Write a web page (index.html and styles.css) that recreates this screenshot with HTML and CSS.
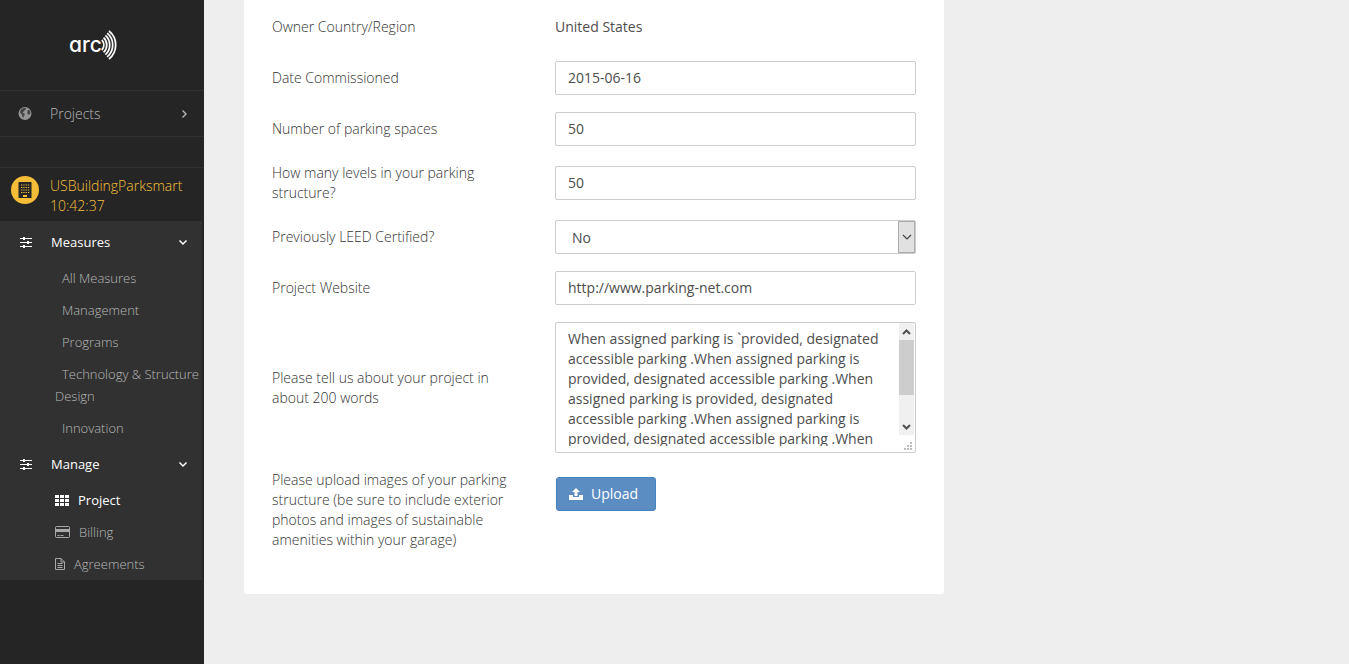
FILE: index.html
```html
<!DOCTYPE html>
<html lang="en">
<head>
<meta charset="utf-8">
<title>Arc - Project</title>
<link rel="stylesheet" href="styles.css">
</head>
<body>
<svg class="defs" aria-hidden="true">
  <symbol id="sliders" viewBox="0 0 12 12">
    <path d="M0 2.500h12M0 6.500h12M0 10.500h12" stroke="currentColor" stroke-width="1.200"/>
    <path d="M3 1h2v3H3zM7 5h2v3H7zM3 9h2v3H3z" fill="currentColor"/>
  </symbol>
  <symbol id="chevron-down" viewBox="0 0 10 10">
    <path d="M1.500 3.500L5 7l3.500-3.500" fill="none" stroke="currentColor" stroke-width="1.500"/>
  </symbol>
</svg>
<aside class="sidebar">
  <a class="logo" href="#">
    <span class="logo-text">arc</span>
    <svg class="logo-waves" width="20" height="30" viewBox="97 29.500 20 30" aria-hidden="true">
      <g fill="none" stroke="#fff" stroke-width="1.700">
        <path d="M109 30.500a18 18 0 0 1 0 28"/>
        <path d="M107.200 32.700a15.400 15.400 0 0 1 0 23.600"/>
        <path d="M105.400 34.900a12.800 12.800 0 0 1 0 19.200"/>
        <path d="M103.600 37.100a10.200 10.200 0 0 1 0 14.800"/>
        <path d="M101.800 39.300a7.600 7.600 0 0 1 0 10.400"/>
      </g>
    </svg>
  </a>
  <nav>
    <a class="nav-row" href="#">
      <svg class="globe" width="14" height="14" viewBox="0 0 14 14" aria-hidden="true">
        <circle cx="7" cy="6.500" r="6.500" fill="#959595"/>
        <path d="M5 1.200L7.500.800l.5 1.200-1.500 1.200-.3 1-1.400.8v.9l1.400.5.7 1.200-.9 1.400-.7 1.700-1-.9-.2-2-1.500-1.400-.5-2.200 1.300-2zM9.800 3.200l1.500-.4 1 1.700v2.300l-1.300 1-1.300-.9-.5-1.600z" fill="#2e2e2e" opacity=".8"/>
      </svg>
      <span class="nav-label">Projects</span>
      <svg width="10" height="10" viewBox="0 0 10 10" aria-hidden="true"><path d="M3.500 1.500L7 5 3.500 8.500" fill="none" stroke="#b5b5b5" stroke-width="1.400"/></svg>
    </a>
    <a class="project-row" href="#">
      <span class="badge">
        <svg width="14" height="18" viewBox="0 0 14 18" aria-hidden="true">
          <path d="M.5 1h13v16H.5z" fill="#252525"/>
          <path d="M3 4h8.500M3 6.500h8.500M3 9h8.500M3 11.500h8.500" stroke="#f4bc37" stroke-width="1.200" stroke-dasharray="1.300 1"/>
          <path d="M5 14h4v2H5z" fill="#f4bc37"/>
        </svg>
      </span>
      <span>USBuildingParksmart<br>10:42:37</span>
    </a>
    <div class="nav-group">
      <button class="group-head" type="button">
        <svg width="12" height="12" aria-hidden="true"><use href="#sliders"/></svg>
        <span class="nav-label">Measures</span>
        <svg width="10" height="10" aria-hidden="true"><use href="#chevron-down"/></svg>
      </button>
      <a class="sub" href="#">All Measures</a>
      <a class="sub" href="#">Management</a>
      <a class="sub" href="#">Programs</a>
      <a class="sub" href="#">Technology &amp; Structure Design</a>
      <a class="sub" href="#">Innovation</a>
      <button class="group-head" type="button">
        <svg width="12" height="12" aria-hidden="true"><use href="#sliders"/></svg>
        <span class="nav-label">Manage</span>
        <svg width="10" height="10" aria-hidden="true"><use href="#chevron-down"/></svg>
      </button>
      <a class="tool active" href="#">
        <svg width="14" height="12" viewBox="0 0 14 12" aria-hidden="true"><path d="M0 1h4v3H0zM5 1h4v3H5zM10 1h4v3h-4zM0 5h4v3H0zM5 5h4v3H5zM10 5h4v3h-4zM0 9h4v3H0zM5 9h4v3H5zM10 9h4v3h-4z" fill="#fff"/></svg>
        Project
      </a>
      <a class="tool" href="#">
        <svg width="15" height="12" viewBox="0 0 15 12" aria-hidden="true"><rect x=".5" y=".5" width="14" height="11" rx="1" fill="none" stroke="#a8a8a8"/><path d="M1 3h13v3H1z" fill="#a8a8a8"/><path d="M2.500 9.500h2M5.500 9.500h3" stroke="#a8a8a8"/></svg>
        Billing
      </a>
      <a class="tool" href="#">
        <svg width="10" height="12" viewBox="0 0 10 12" aria-hidden="true"><path d="M.5.5h5.500l3.500 3.500v7.500h-9zM6 .5V4h3.500M2.500 5.500h5M2.500 7.500h5M2.500 9.500h5" fill="none" stroke="#a8a8a8"/></svg>
        Agreements
      </a>
    </div>
  </nav>
</aside>
<main class="content">
  <form class="card">
    <div class="row">
      <span class="label">Owner Country/Region</span>
      <span class="value">United States</span>
    </div>
    <div class="row">
      <label class="label" for="date">Date Commissioned</label>
      <input class="field" id="date" type="text" value="2015-06-16">
    </div>
    <div class="row">
      <label class="label" for="spaces">Number of parking spaces</label>
      <input class="field" id="spaces" type="text" value="50">
    </div>
    <div class="row">
      <label class="label" for="levels">How many levels in your parking structure?</label>
      <input class="field" id="levels" type="text" value="50">
    </div>
    <div class="row">
      <label class="label" for="leed">Previously LEED Certified?</label>
      <div class="select-wrap">
        <select class="field" id="leed"><option>No</option><option>Yes</option></select>
        <span class="select-arrow"><svg width="10" height="10" viewBox="0 0 10 10" aria-hidden="true"><path d="M1 3l4 4 4-4" fill="none" stroke="#444" stroke-width="1.200"/></svg></span>
      </div>
    </div>
    <div class="row">
      <label class="label" for="website">Project Website</label>
      <input class="field" id="website" type="text" value="http://www.parking-net.com">
    </div>
    <div class="row">
      <label class="label" for="about">Please tell us about your project in about 200 words</label>
      <div class="area">
        <textarea id="about">When assigned parking is `provided, designated accessible parking .When assigned parking is provided, designated accessible parking .When assigned parking is provided, designated accessible parking .When assigned parking is provided, designated accessible parking .When assigned parking is provided, designated accessible parking .</textarea>
        <div class="scroll" aria-hidden="true">
          <div class="track">
            <svg width="15" height="17" viewBox="0 0 15 17"><path d="M4 11l3.500-3.500L11 11" fill="none" stroke="#505050" stroke-width="2"/></svg>
            <div class="thumb"></div>
            <svg class="down" width="15" height="17" viewBox="0 0 15 17"><path d="M4 7l3.500 3.500L11 7" fill="none" stroke="#505050" stroke-width="2"/></svg>
          </div>
          <svg width="15" height="17" viewBox="0 0 15 17"><path d="M11 7h2v2h-2zM8 10h2v2H8zM11 10h2v2h-2zM5 13h2v2H5zM8 13h2v2H8zM11 13h2v2h-2z" fill="#bdbdbd"/></svg>
        </div>
      </div>
    </div>
    <div class="row upload-row">
      <span class="label">Please upload images of your parking structure (be sure to include exterior photos and images of sustainable amenities within your garage)</span>
      <button class="upload" type="button">
        <svg width="14" height="12" viewBox="0 0 14 12" aria-hidden="true"><path d="M7 0l4 4H8.500v4h-3V4H3zM0 7h4v2h6V7h4v5H0z" fill="#fff"/></svg>
        Upload
      </button>
    </div>
  </form>
</main>
</body>
</html>
```

FILE: styles.css
```css
* {
  box-sizing: border-box;
}

body {
  margin: 0;
  min-height: 100vh;
  display: flex;
  background: #eee;
  color: #4d4d4d;
  font: 400 14px/20px "Open Sans", sans-serif;
}

a {
  color: inherit;
  text-decoration: none;
}

button,
input,
select,
textarea {
  font: inherit;
  color: inherit;
}

svg {
  flex: none;
}

.defs {
  position: absolute;
  width: 0;
  height: 0;
}

.sidebar {
  flex: none;
  width: 204px;
  background: #252525;
  color: #b8b8b8;
  font-weight: 300;
}

.logo {
  display: flex;
  align-items: center;
  height: 90px;
  padding-left: 69px;
}

.logo-text {
  color: #fff;
  font: 500 21px/30px Inter, sans-serif;
  font-feature-settings: "cv11";
}

.logo-waves {
  margin-left: -5px;
}

.nav-row {
  display: flex;
  align-items: center;
  height: 47px;
  padding: 0 15px 0 18px;
  border-top: 1px solid #303030;
  border-bottom: 1px solid #303030;
}

.nav-row .nav-label {
  margin-left: 18px;
}

.nav-label {
  flex: 1;
  text-align: left;
}

.project-row {
  display: flex;
  gap: 11px;
  margin-top: 30px;
  padding: 8px 0 5px 11px;
  border-top: 1px solid #303030;
  color: #f8c03a;
}

.badge {
  display: flex;
  align-items: center;
  justify-content: center;
  width: 28px;
  height: 28px;
  border-radius: 50%;
  background: #f4bc37;
}

.nav-group {
  margin-right: 2px;
  padding-top: 1px;
  background: #313131;
  font-size: 13px;
  line-height: 22px;
}

.group-head {
  display: flex;
  align-items: center;
  gap: 19px;
  width: 100%;
  height: 40px;
  padding: 0 14px 0 20px;
  border: 0;
  background: none;
  color: #fff;
  font-weight: 400;
}

.sub {
  display: block;
  padding: 5px 0 5px 55px;
  text-indent: 7px;
}

.tool {
  display: flex;
  align-items: center;
  gap: 9px;
  padding: 5px 0 5px 55px;
}

.tool.active {
  color: #fff;
  font-weight: 400;
}

.content {
  flex: 1;
  padding: 0 40px 70px;
}

.card {
  max-width: 700px;
  padding: 2px 28px 35px;
  border-radius: 0 0 3px 3px;
  background: #fff;
}

.row {
  display: grid;
  grid-template-columns: 243px 1fr;
  column-gap: 40px;
  align-items: center;
  min-height: 51px;
  padding: 8px 0 9px;
}

.label {
  color: #333;
  font-weight: 300;
}

.field {
  display: block;
  width: 100%;
  max-width: 361px;
  height: 34px;
  padding: 5px 12px 7px;
  border: 1px solid #ccc;
  border-radius: 2px;
  background: #fff;
}

.select-wrap {
  position: relative;
  max-width: 361px;
}

select.field {
  appearance: none;
  padding: 7px 16px 5px;
}

.select-arrow {
  position: absolute;
  top: 1px;
  right: 1px;
  bottom: 1px;
  width: 17px;
  display: flex;
  align-items: center;
  justify-content: center;
  border: 1px solid #acacac;
  background: #e1e1e1;
  pointer-events: none;
}

.area {
  display: flex;
  max-width: 361px;
  height: 131px;
  border: 1px solid #ccc;
  border-radius: 2px;
}

.area textarea {
  flex: 1;
  min-width: 0;
  margin: 6px 12px;
  padding: 0;
  border: 0;
  background: none;
  resize: none;
  overflow: hidden;
}

.scroll {
  display: flex;
  flex-direction: column;
  width: 15px;
  margin-right: 1px;
}

.track {
  flex: 1;
  display: flex;
  flex-direction: column;
  background: #f0f0f0;
}

.thumb {
  height: 55px;
  background: #cdcdcd;
}

.down {
  margin-top: auto;
}

.upload-row {
  align-items: start;
}

.upload {
  display: flex;
  align-items: center;
  justify-self: start;
  gap: 8px;
  height: 34px;
  margin: 7px 0 0 1px;
  padding: 0 17px 0 12px;
  border: 1px solid #4682be;
  border-radius: 3px;
  background: #5b8dc3;
  color: #fff;
}
```
